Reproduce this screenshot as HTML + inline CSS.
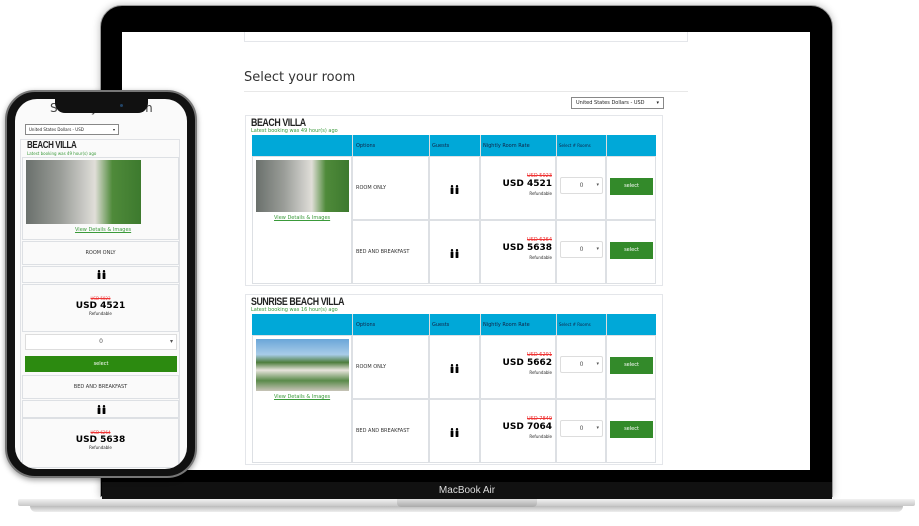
<!DOCTYPE html>
<html><head><meta charset="utf-8"><style>
*{margin:0;padding:0;box-sizing:border-box}
body{width:919px;height:526px;background:#fff;position:relative;overflow:hidden;font-family:"DejaVu Sans","Liberation Sans",sans-serif;color:#222}
.a{position:absolute}
.lid{left:100px;top:5px;width:733px;height:492px;background:#000;border-radius:22px 22px 0 0;border:1px solid #999;box-shadow:0 0 8px rgba(0,0,0,.25)}
.scr{left:122px;top:32px;width:688px;height:438px;background:#fff;overflow:hidden}
.card{border:1px solid #e4e6ea;background:#fff}
.t{font-family:"Liberation Sans",sans-serif;font-weight:bold;letter-spacing:-.5px;transform:scaleX(.8);transform-origin:left}
.g{color:#3a9a3a;font-size:5px}
.hd{background:#00a8d8}
.c{border:1px solid #dde0e4}
.sm{font-size:5px;color:#333}
.btn{background:#338a2a;color:#fff;font-size:5px;text-align:center}
.sel{border:1px solid #ddd;border-radius:2px;font-size:6px;color:#555}
.old{color:#e33;font-size:5px;text-decoration:line-through;text-align:right}
.pr{font-weight:bold;font-size:9px;text-align:right;color:#000}
.rf{font-size:4px;text-align:right}
.img1{background:linear-gradient(90deg,#6a706c 0,#9a9d98 30%,#c8c8c4 50%,#e0ded8 60%,#4f8a3a 75%,#3d7a2e 100%)}
.img2{background:linear-gradient(180deg,#6aa6d8 0,#a8cce8 30%,#4d7d3c 45%,#e8e4dc 60%,#5a8a4a 80%,#c8c4b8 100%)}
.gi{position:absolute;width:9px;height:9px}
</style></head><body>
<svg width="0" height="0" style="position:absolute"><defs><g id="pp"><circle cx="2" cy="1.2" r="1.2" fill="#000"/><rect x="0.6" y="2.6" width="2.8" height="6.4" rx=".5" fill="#000"/><circle cx="7" cy="1.2" r="1.2" fill="#000"/><rect x="5.6" y="2.6" width="2.8" height="6.4" rx=".5" fill="#000"/></g></defs></svg>
<!-- laptop -->
<div class="a lid"></div>
<div class="a" style="left:102px;top:482px;width:730px;height:18px;background:#111;text-align:center;color:#ddd;font-family:'Liberation Sans',sans-serif;font-size:10px;line-height:18px">MacBook Air</div>
<div class="a" style="left:18px;top:499px;width:897px;height:7px;background:linear-gradient(#f2f2f2,#c8c8c8);border-radius:2px"></div>
<div class="a" style="left:30px;top:506px;width:873px;height:6px;background:linear-gradient(#bbb,#eee);border-radius:0 0 40px 40px"></div>
<div class="a" style="left:397px;top:499px;width:140px;height:8px;background:linear-gradient(#ddd,#aaa);border-radius:0 0 4px 4px"></div>
<div class="a scr">
 <div class="a" style="left:122px;top:-2px;width:444px;height:12px;border:1px solid #e4e6ea"></div>
 <div class="a" style="left:122px;top:38px;font-size:13px;color:#333">Select your room</div>
 <div class="a" style="left:122px;top:59px;width:444px;height:1px;background:#e8e8e8"></div>
 <div class="a" style="left:449px;top:65px;width:93px;height:12px;border:1px solid #888;font-size:5px;padding:2px 4px">United States Dollars - USD <span style="float:right">▾</span></div>
 <div class="a card" style="left:123px;top:83px;width:418px;height:171px"></div>
 <div class="a t" style="left:129px;top:85px;font-size:11px">BEACH VILLA</div>
 <div class="a g" style="left:129px;top:96px">Latest booking was 49 hour(s) ago</div>
 <div class="a hd" style="left:130px;top:103px;width:404px;height:21px"></div>
 <div class="a c" style="left:130px;top:124px;width:100px;height:128px"></div>
 <div class="a img1" style="left:134px;top:128px;width:93px;height:52px"></div>
 <div class="a g" style="left:152px;top:183px;font-size:5px;text-decoration:underline">View Details &amp; Images</div>
 <div class="a card" style="left:123px;top:262px;width:418px;height:171px"></div>
 <div class="a t" style="left:129px;top:264px;font-size:11px">SUNRISE BEACH VILLA</div>
 <div class="a g" style="left:129px;top:275px">Latest booking was 16 hour(s) ago</div>
 <div class="a hd" style="left:130px;top:282px;width:404px;height:21px"></div>
 <div class="a c" style="left:130px;top:303px;width:100px;height:128px"></div>
 <div class="a img2" style="left:134px;top:307px;width:93px;height:52px"></div>
 <div class="a g" style="left:152px;top:362px;font-size:5px;text-decoration:underline">View Details &amp; Images</div>
 <div id="rows"></div>
</div>
<!-- phone -->
<div class="a" style="left:5px;top:90px;width:192px;height:388px;background:#111;border-radius:30px;border:2px solid #777;box-shadow:0 2px 6px rgba(0,0,0,.4)"></div>
<div class="a" style="left:15px;top:99px;width:172px;height:370px;background:#fafafa;border-radius:22px;overflow:hidden">
 <div class="a" style="left:35px;top:2px;font-size:12px;color:#444">Select your room</div>
 <div class="a" style="left:10px;top:25px;width:94px;height:11px;border:1px solid #888;font-size:4px;padding:2px 3px;background:#fff">United States Dollars - USD <span style="float:right">▾</span></div>
 <div class="a" style="left:5px;top:40px;width:160px;height:340px;border:1px solid #e0e2e6"></div>
 <div class="a t" style="left:12px;top:41px;font-size:10px">BEACH VILLA</div>
 <div class="a" style="left:12px;top:52px;font-size:4px;color:#3a9a3a">Latest booking was 49 hour(s) ago</div>
 <div class="a c" style="left:7px;top:58px;width:157px;height:83px"></div>
 <div class="a img1" style="left:11px;top:61px;width:115px;height:64px"></div>
 <div class="a" style="left:60px;top:128px;font-size:5px;color:#3a9a3a;text-decoration:underline">View Details &amp; Images</div>
 <div class="a c sm" style="left:7px;top:142px;width:157px;height:24px;text-align:center;line-height:22px;font-size:5px">ROOM ONLY</div>
 <div class="a c" style="left:7px;top:167px;width:157px;height:17px"><svg class="gi" style="left:74px;top:3px" viewBox="0 0 9 9"><use href="#pp"/></svg></div>
 <div class="a c" style="left:7px;top:185px;width:157px;height:48px;text-align:center"><div style="color:#e33;font-size:4px;text-decoration:line-through;margin-top:11px">USD 5023</div><div style="font-weight:bold;font-size:9px;color:#000">USD 4521</div><div style="font-size:4px">Refundable</div></div>
 <div class="a" style="left:10px;top:235px;width:152px;height:16px;border:1px solid #ddd;background:#fff;font-size:6px;text-align:center;line-height:14px;color:#555">0<span style="position:absolute;right:3px">▾</span></div>
 <div class="a" style="left:10px;top:257px;width:152px;height:16px;background:#2c8a10;color:#fff;font-size:5px;text-align:center;line-height:16px">select</div>
 <div class="a c sm" style="left:7px;top:276px;width:157px;height:24px;text-align:center;line-height:22px;font-size:5px">BED AND BREAKFAST</div>
 <div class="a c" style="left:7px;top:301px;width:157px;height:18px"><svg class="gi" style="left:74px;top:4px" viewBox="0 0 9 9"><use href="#pp"/></svg></div>
 <div class="a c" style="left:7px;top:319px;width:157px;height:50px;text-align:center"><div style="color:#e33;font-size:4px;text-decoration:line-through;margin-top:11px">USD 6264</div><div style="font-weight:bold;font-size:9px;color:#000">USD 5638</div><div style="font-size:4px">Refundable</div></div>
</div>
<div class="a" style="left:55px;top:99px;width:93px;height:14px;background:#111;border-radius:0 0 10px 10px"></div>
<div class="a" style="left:120px;top:104px;width:3px;height:3px;background:#246;border-radius:50%"></div>
<script>
var rows=[[124,"ROOM ONLY","USD 5023","USD 4521"],[188,"BED AND BREAKFAST","USD 6264","USD 5638"],[303,"ROOM ONLY","USD 6291","USD 5662"],[367,"BED AND BREAKFAST","USD 7849","USD 7064"]];
var h="";
[103,282].forEach(function(y){
h+='<div class="a" style="left:230px;top:'+y+'px;width:1px;height:21px;background:#ddd"></div>';
h+='<div class="a" style="left:234px;top:'+(y+8)+'px;font-size:5px;color:#124">Options</div>';
h+='<div class="a" style="left:307px;top:'+y+'px;width:1px;height:21px;background:#ddd"></div><div class="a" style="left:310px;top:'+(y+8)+'px;font-size:5px;color:#124">Guests</div>';
h+='<div class="a" style="left:358px;top:'+y+'px;width:1px;height:21px;background:#ddd"></div><div class="a" style="left:361px;top:'+(y+8)+'px;font-size:5px;color:#124">Nightly Room Rate</div>';
h+='<div class="a" style="left:434px;top:'+y+'px;width:1px;height:21px;background:#ddd"></div><div class="a" style="left:437px;top:'+(y+8)+'px;font-size:4px;color:#124">Select # Rooms</div>';
h+='<div class="a" style="left:484px;top:'+y+'px;width:1px;height:21px;background:#ddd"></div>';});
rows.forEach(function(r){var y=r[0];
h+='<div class="a c" style="left:230px;top:'+y+'px;width:77px;height:64px"></div>';
h+='<div class="a sm" style="left:234px;top:'+(y+29)+'px">'+r[1]+'</div>';
h+='<div class="a c" style="left:307px;top:'+y+'px;width:51px;height:64px"><svg class="gi" style="left:20px;top:28px" viewBox="0 0 9 9"><use href="#pp"/></svg></div>';
h+='<div class="a c" style="left:358px;top:'+y+'px;width:76px;height:64px"></div>';
h+='<div class="a old" style="left:360px;top:'+(y+17)+'px;width:70px">'+r[2]+'</div>';
h+='<div class="a pr" style="left:360px;top:'+(y+23)+'px;width:70px">'+r[3]+'</div>';
h+='<div class="a rf" style="left:360px;top:'+(y+35)+'px;width:70px">Refundable</div>';
h+='<div class="a c" style="left:434px;top:'+y+'px;width:50px;height:64px"></div>';
h+='<div class="a sel" style="left:438px;top:'+(y+21)+'px;width:43px;height:17px;text-align:center;line-height:15px">0<span style="position:absolute;right:3px;font-size:5px">▾</span></div>';
h+='<div class="a c" style="left:484px;top:'+y+'px;width:50px;height:64px"></div>';
h+='<div class="a btn" style="left:488px;top:'+(y+22)+'px;width:43px;height:17px;line-height:17px">select</div>';});
document.getElementById("rows").innerHTML=h;
</script>
</body></html>
